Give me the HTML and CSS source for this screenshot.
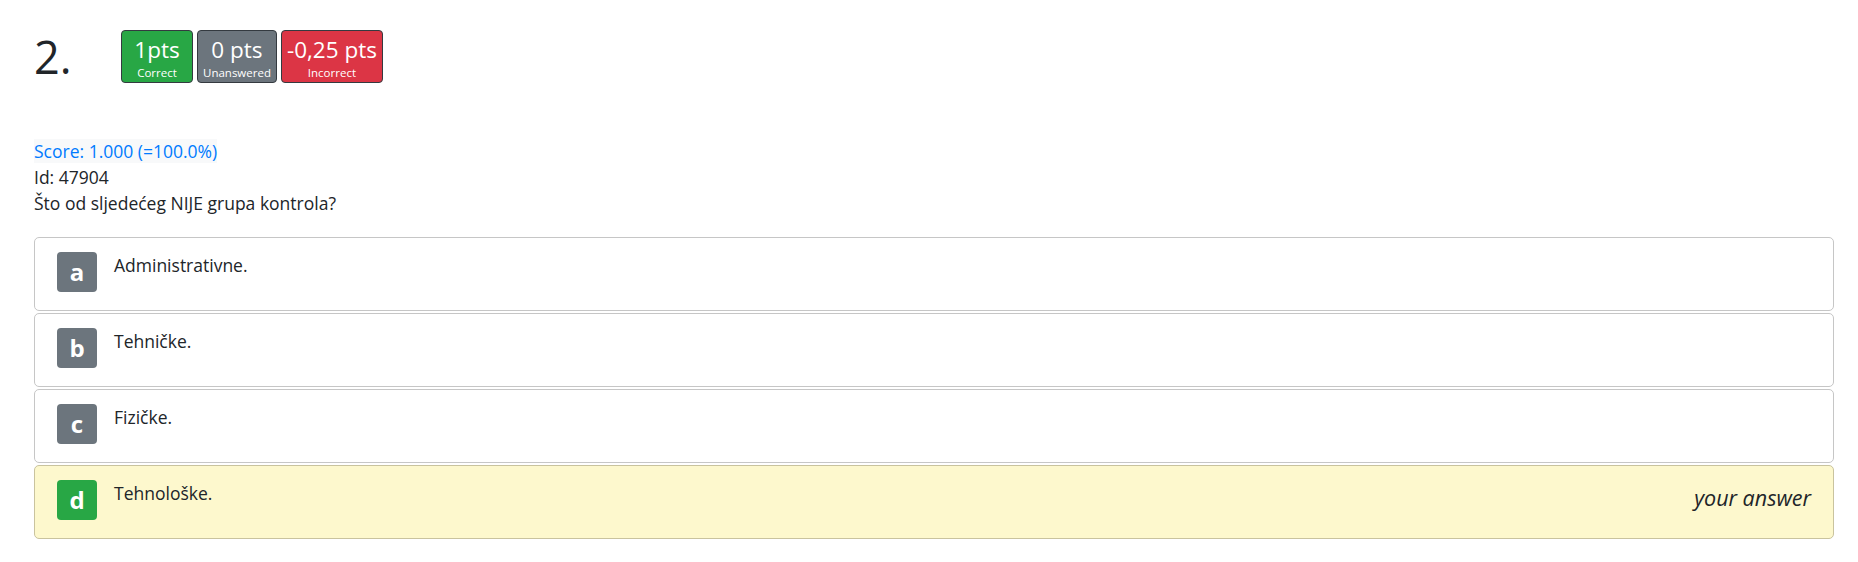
FILE: index.html
```html
<!DOCTYPE html>
<html lang="hr">
<head>
<meta charset="utf-8">
<title>Question 2</title>
<link rel="stylesheet" href="styles.css">
</head>
<body>
<div class="page">
  <div class="head">
    <div class="qnum">2.</div>
    <div class="badges">
      <div class="pbadge green"><span class="pts">1pts</span><span class="lbl">Correct</span></div>
      <div class="pbadge gray"><span class="pts">0 pts</span><span class="lbl">Unanswered</span></div>
      <div class="pbadge red"><span class="pts">-0,25 pts</span><span class="lbl">Incorrect</span></div>
    </div>
  </div>
  <div class="meta">
    <div><span class="score">Score: 1.000 (=100.0%)</span></div>
    <div>Id: 47904</div>
    <div>Što od sljedećeg NIJE grupa kontrola?</div>
  </div>
  <div class="options">
    <div class="opt"><span class="letter">a</span><span class="otext">Administrativne.</span></div>
    <div class="opt"><span class="letter">b</span><span class="otext">Tehničke.</span></div>
    <div class="opt"><span class="letter">c</span><span class="otext">Fizičke.</span></div>
    <div class="opt chosen"><span class="letter ok">d</span><span class="otext">Tehnološke.</span><span class="yours">your answer</span></div>
  </div>
</div>
</body>
</html>
```
FILE: styles.css
```css
html, body { margin: 0; padding: 0; background: #fff; }
body { font-family: "Open Sans", "Noto Sans", sans-serif; color: #212529; }
.page { padding: 30px 24px 0 34px; }
.head { display: flex; align-items: center; }
.qnum { width: 87px; font-size: 45px; font-weight: 400; line-height: 53px; color: #212529; }
.badges { display: flex; gap: 4px; }
.pbadge { min-width: 72px; box-sizing: border-box; height: 53px; padding: 4px 5px 0; border: 1px solid #343a40; border-radius: 4px; color: #fff; display: flex; flex-direction: column; align-items: center; }
.pbadge .pts { font-size: 22.5px; line-height: 30px; }
.pbadge .lbl { font-size: 11.5px; font-weight: 500; line-height: 15px; }
.green { background: #28a745; }
.gray { background: #6c757d; }
.red { background: #dc3545; }
.meta { margin-top: 55px; font-size: 17.5px; line-height: 26px; }
.score { color: #007bff; background: #f8f9fa; }
.options { margin-top: 21px; display: flex; flex-direction: column; gap: 2px; }
.opt { height: 74px; box-sizing: border-box; border: 1px solid #c6c6c6; border-radius: 5px; padding: 14px 22px 0; display: flex; align-items: flex-start; font-size: 17.5px; line-height: 26px; }
.opt.chosen { background: #fdf8cd; border-color: #c9c39e; }
.letter { width: 40px; height: 40px; border-radius: 4px; background: #6c757d; color: #fff; font-weight: 700; font-size: 24px; line-height: 40px; text-align: center; margin-right: 17px; flex: none; }
.letter.ok { background: #28a745; }
.otext { flex: 1; }
.yours { font-style: italic; font-size: 21.5px; line-height: 28px; padding-top: 4px; }
```
